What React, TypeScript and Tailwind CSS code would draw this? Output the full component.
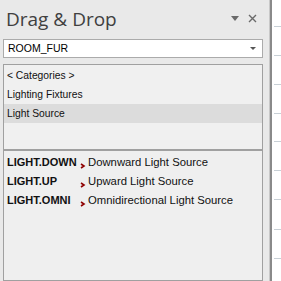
import React from "react";

const Arrow = () => (
  <svg width="6" height="6" viewBox="0 0 6 6" className="mt-[6px]">
    <path d="M1 1 L4 3 L1 5" stroke="#8e0000" strokeWidth="1.6" fill="none" />
  </svg>
);

const items = [
  { name: "LIGHT.DOWN", desc: "Downward Light Source" },
  { name: "LIGHT.UP", desc: "Upward Light Source" },
  { name: "LIGHT.OMNI", desc: "Omnidirectional Light Source" },
];

const ticks = [26, 55, 84, 113, 141, 170, 199, 229, 258];

export default function App() {
  return (
    <div className="flex h-[281px] w-[281px] overflow-hidden bg-white" style={{ fontFamily: '"Liberation Sans", Arial, sans-serif' }}>
      <div className="flex w-[269px] flex-col bg-[#e9e9e9]">
        {/* header */}
        <div className="flex h-[39px] items-start pt-[6px] pl-[6px] pr-[12px]">
          <span className="text-[19px] leading-[26px] text-[#404040]" style={{ fontFamily: '"Open Sans", "Noto Sans", sans-serif' }}>
            Drag &amp; Drop
          </span>
          <div className="ml-auto flex items-center gap-[9px] pt-[8px]">
            <svg width="8" height="5" viewBox="0 0 8 5">
              <path d="M0 0 H8 L4 5 Z" fill="#6a6a6a" />
            </svg>
            <svg width="9" height="9" viewBox="0 0 9 9">
              <path d="M1 1 L8 8 M8 1 L1 8" stroke="#6a6a6a" strokeWidth="1.4" />
            </svg>
          </div>
        </div>
        {/* combo */}
        <div className="ml-[3px] mr-[6px] flex h-[19px] items-center border border-[#ababab] bg-white pl-[4px] pr-[6px]">
          <span className="text-[10.5px] leading-none text-black">ROOM_FUR</span>
          <svg width="6" height="3" viewBox="0 0 6 3" className="ml-auto">
            <path d="M0 0 H6 L3 3 Z" fill="#555" />
          </svg>
        </div>
        {/* categories */}
        <div className="ml-[3px] mr-[6px] mt-[6px] h-[86px] border border-[#a0a0a0] bg-[#f0f0f0] pt-[1px]">
          <div className="flex h-[19px] items-center pl-[3px] text-[10.3px] text-[#111]">&lt; Categories &gt;</div>
          <div className="flex h-[19px] items-center pl-[3px] text-[10.3px] text-[#111]">Lighting Fixtures</div>
          <div className="flex h-[19px] items-center bg-[#dcdcdc] pl-[3px] text-[10.3px] text-[#111]">Light Source</div>
        </div>
        {/* items */}
        <div className="ml-[3px] mr-[6px] flex-1 border border-[#a0a0a0] bg-[#efefef] pt-[2px]">
          {items.map((it) => (
            <div key={it.name} className="flex h-[19px] items-center pl-[3px]">
              <span className="w-[73px] text-[11px] font-bold text-[#111]">{it.name}</span>
              <span className="w-[8px]"><Arrow /></span>
              <span className="text-[11.3px] text-[#111]">{it.desc}</span>
            </div>
          ))}
        </div>
      </div>
      <div className="w-[1px] bg-[#c8c8c8]" />
      <div className="w-[2px] bg-[#8a8a8a]" />
      <div className="relative flex-1 bg-white">
        {ticks.map((t) => (
          <div key={t} className="absolute right-0 h-[1px] w-[7px] bg-[#c8d0d6]" style={{ top: t }} />
        ))}
      </div>
    </div>
  );
}
